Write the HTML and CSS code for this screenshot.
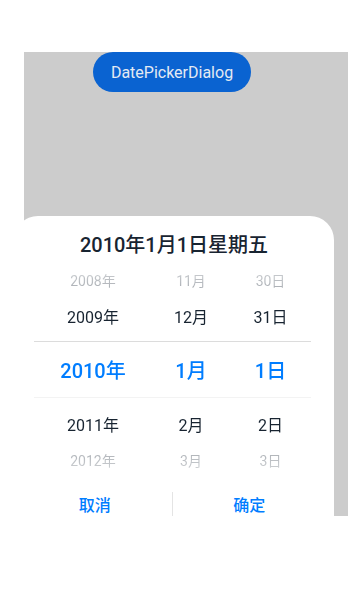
FILE: index.html
```html
<!DOCTYPE html>
<html lang="zh">
<head>
<meta charset="utf-8">
<link rel="stylesheet" href="styles.css">
</head>
<body>
<div class="stage">
  <button class="open-btn">DatePickerDialog</button>
  <div class="dialog">
    <div class="title">2010年1月1日星期五</div>
    <div class="picker">
      <div class="row far"><span>2008年</span><span>11月</span><span>30日</span></div>
      <div class="row near"><span>2009年</span><span>12月</span><span>31日</span></div>
      <div class="row sel"><span>2010年</span><span>1月</span><span>1日</span></div>
      <div class="row near"><span>2011年</span><span>2月</span><span>2日</span></div>
      <div class="row far"><span>2012年</span><span>3月</span><span>3日</span></div>
    </div>
    <div class="actions">
      <div class="act">取消</div>
      <div class="sep"></div>
      <div class="act">确定</div>
    </div>
  </div>
</div>
</body>
</html>
```
FILE: styles.css
```css
html, body {
  margin: 0;
  padding: 0;
  background: #ffffff;
}
body {
  font-family: Roboto, "Noto Sans CJK SC", sans-serif;
  width: 348px;
  height: 604px;
  overflow: hidden;
}
.stage {
  position: relative;
  margin: 52px 0 0 24px;
  width: 324px;
  height: 464px;
  background: #cccccc;
  overflow: hidden;
}
.open-btn {
  display: block;
  margin-left: 69px;
  width: 158px;
  height: 40px;
  border: none;
  border-radius: 20px;
  background: #0a63d1;
  color: #e4eaf3;
  font-family: Roboto, "Noto Sans CJK SC", sans-serif;
  font-size: 16px;
  padding: 0;
}
.dialog {
  position: absolute;
  left: -10px;
  top: 164px;
  width: 320px;
  height: 360px;
  background: #ffffff;
  border-radius: 24px;
}
.title {
  padding-top: 15px;
  height: 31px;
  line-height: 28px;
  text-align: center;
  font-size: 20px;
  font-weight: 500;
  color: #182431;
}
.picker {
  margin: 0 23px 0 20px;
  -webkit-mask-image: linear-gradient(to bottom, rgba(0,0,0,0.35) 0, #000 34px, #000 calc(100% - 34px), rgba(0,0,0,0.35) 100%);
  mask-image: linear-gradient(to bottom, rgba(0,0,0,0.35) 0, #000 34px, #000 calc(100% - 34px), rgba(0,0,0,0.35) 100%);
}
.row {
  display: grid;
  grid-template-columns: 118px 78px 81px;
  align-items: center;
  justify-items: center;
  height: 36px;
  color: #182431;
}
.row.far {
  font-size: 14px;
  color: rgba(24, 36, 49, 0.42);
}
.row.near {
  font-size: 16px;
}
.row.sel {
  height: 55px;
  margin: 7px 0 8px;
  border-top: 1px solid #dcdcdc;
  border-bottom: 1px solid #f3f3f3;
  font-size: 20px;
  font-weight: 500;
  color: #007dff;
}
.actions {
  display: flex;
  align-items: center;
  margin: 6px 8px 0 4px;
  height: 40px;
}
.act {
  flex: 1;
  text-align: center;
  font-size: 16px;
  font-weight: 500;
  color: #007dff;
}
.sep {
  width: 1px;
  height: 24px;
  background: #e4e4e4;
}
```
